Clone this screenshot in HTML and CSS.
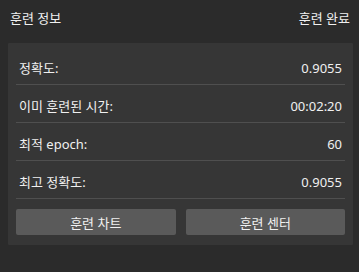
FILE: index.html
```html
<!DOCTYPE html>
<html lang="ko">
<head>
<meta charset="utf-8">
<link rel="stylesheet" href="styles.css">
</head>
<body>
<div class="app">
  <div class="header">
    <span class="title">훈련 정보</span>
    <span class="status">훈련 완료</span>
  </div>
  <div class="panel">
    <div class="row"><span class="label">정확도:</span><span class="value">0.9055</span></div>
    <div class="row"><span class="label">이미 훈련된 시간:</span><span class="value">00:02:20</span></div>
    <div class="row"><span class="label">최적 epoch:</span><span class="value">60</span></div>
    <div class="row"><span class="label">최고 정확도:</span><span class="value">0.9055</span></div>
    <div class="buttons">
      <button class="btn">훈련 차트</button>
      <button class="btn">훈련 센터</button>
    </div>
  </div>
</div>
</body>
</html>
```
FILE: styles.css
```css
html, body {
  margin: 0;
  padding: 0;
  background: #2b2b2b;
}
body {
  width: 359px;
  height: 272px;
  font-family: "Noto Sans", "Noto Sans CJK KR", sans-serif;
  font-size: 13px;
  color: #f0f0f0;
}
.header {
  height: 35px;
  display: flex;
  align-items: center;
  justify-content: space-between;
  padding: 0 9px 0 10px;
}
.panel {
  margin: 8px 6px 0 8px;
  background: #363636;
  padding: 4px 8px 10px 8px;
  border-radius: 1px;
}
.row {
  display: flex;
  justify-content: space-between;
  align-items: center;
  height: 20px;
  line-height: 20px;
  padding: 11px 3px 6px 3px;
  border-bottom: 1px solid #4f4f4f;
}
.buttons {
  display: flex;
  gap: 10px;
  margin-top: 10px;
}
.btn {
  flex: 1;
  height: 26px;
  border: none;
  border-radius: 2px;
  background: #5a5a5a;
  color: #f0f0f0;
  font-family: "Noto Sans", "Noto Sans CJK KR", sans-serif;
  font-size: 13px;
  padding: 0;
}
```
